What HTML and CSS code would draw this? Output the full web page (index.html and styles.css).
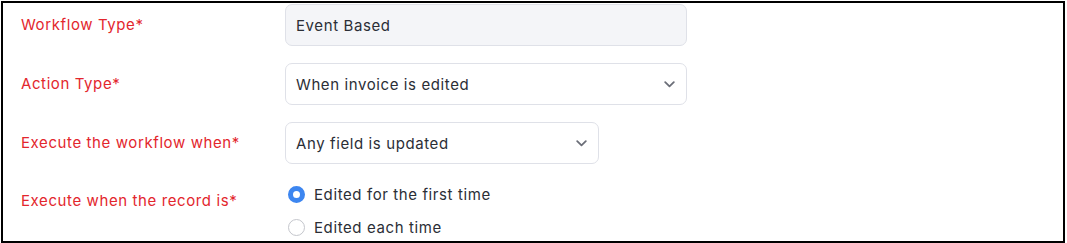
FILE: index.html
```html
<!DOCTYPE html>
<html lang="en">
<head>
    <meta charset="UTF-8">
    <meta name="viewport" content="width=device-width, initial-scale=1.0">
    <title>Workflow Settings</title>
    <link rel="stylesheet" href="styles.css">
</head>
<body>
    <div class="frame">
        <div class="row">
            <label class="label">Workflow Type*</label>
            <div class="field field-wide field-readonly">Event Based</div>
        </div>

        <div class="row">
            <label class="label">Action Type*</label>
            <div class="field field-wide">
                <span>When invoice is edited</span>
                <svg class="chevron" width="11" height="7" viewBox="0 0 11 7"><path d="M1.2 1.2 L5.5 5.3 L9.8 1.2" fill="none" stroke="#6b6e78" stroke-width="1.8" stroke-linecap="round" stroke-linejoin="round"/></svg>
            </div>
        </div>

        <div class="row">
            <label class="label">Execute the workflow when*</label>
            <div class="field field-narrow">
                <span>Any field is updated</span>
                <svg class="chevron" width="11" height="7" viewBox="0 0 11 7"><path d="M1.2 1.2 L5.5 5.3 L9.8 1.2" fill="none" stroke="#6b6e78" stroke-width="1.8" stroke-linecap="round" stroke-linejoin="round"/></svg>
            </div>
        </div>

        <div class="row row-top">
            <label class="label label-radio">Execute when the record is*</label>
            <div class="radios">
                <div class="radio-item">
                    <span class="radio radio-checked"></span>
                    <span>Edited for the first time</span>
                </div>
                <div class="radio-item">
                    <span class="radio"></span>
                    <span>Edited each time</span>
                </div>
            </div>
        </div>
    </div>
</body>
</html>
```

FILE: styles.css
```css
body {
    margin: 0;
    font-family: Inter, "Noto Sans", sans-serif;
    letter-spacing: 0.6px;
    background: #fff;
    color: #2b2e36;
}

.frame {
    margin: 1px 2px 0 1px;
    height: 237px;
    border: 2px solid #000;
    padding: 1px 0 0 18px;
    display: flex;
    flex-direction: column;
    gap: 17px;
    overflow: hidden;
}

.row {
    display: flex;
    align-items: center;
}

.row-top {
    align-items: flex-start;
}

.label {
    width: 264px;
    flex-shrink: 0;
    color: #e3262d;
    font-size: 15px;
    line-height: 20px;
}

.label-radio {
    padding-top: 10px;
}

.field {
    box-sizing: border-box;
    height: 42px;
    border: 1px solid #dfe1e8;
    border-radius: 7px;
    background: #fff;
    padding: 0 11px 0 10px;
    display: flex;
    align-items: center;
    justify-content: space-between;
    font-size: 15px;
}

.field-wide {
    width: 402px;
}

.field-narrow {
    width: 314px;
}

.field-readonly {
    background: #f4f5f8;
}

.radios {
    display: flex;
    flex-direction: column;
    gap: 6px;
}

.radio-item {
    height: 28px;
    display: flex;
    align-items: center;
    gap: 9px;
    font-size: 15px;
    margin-left: 3px;
    margin-top: -1px;
}

.radio {
    box-sizing: border-box;
    width: 17px;
    height: 17px;
    border-radius: 50%;
    border: 1px solid #c4c6cc;
    background: #fff;
}

.radio-checked {
    border: 5px solid #3d86f0;
}
```
